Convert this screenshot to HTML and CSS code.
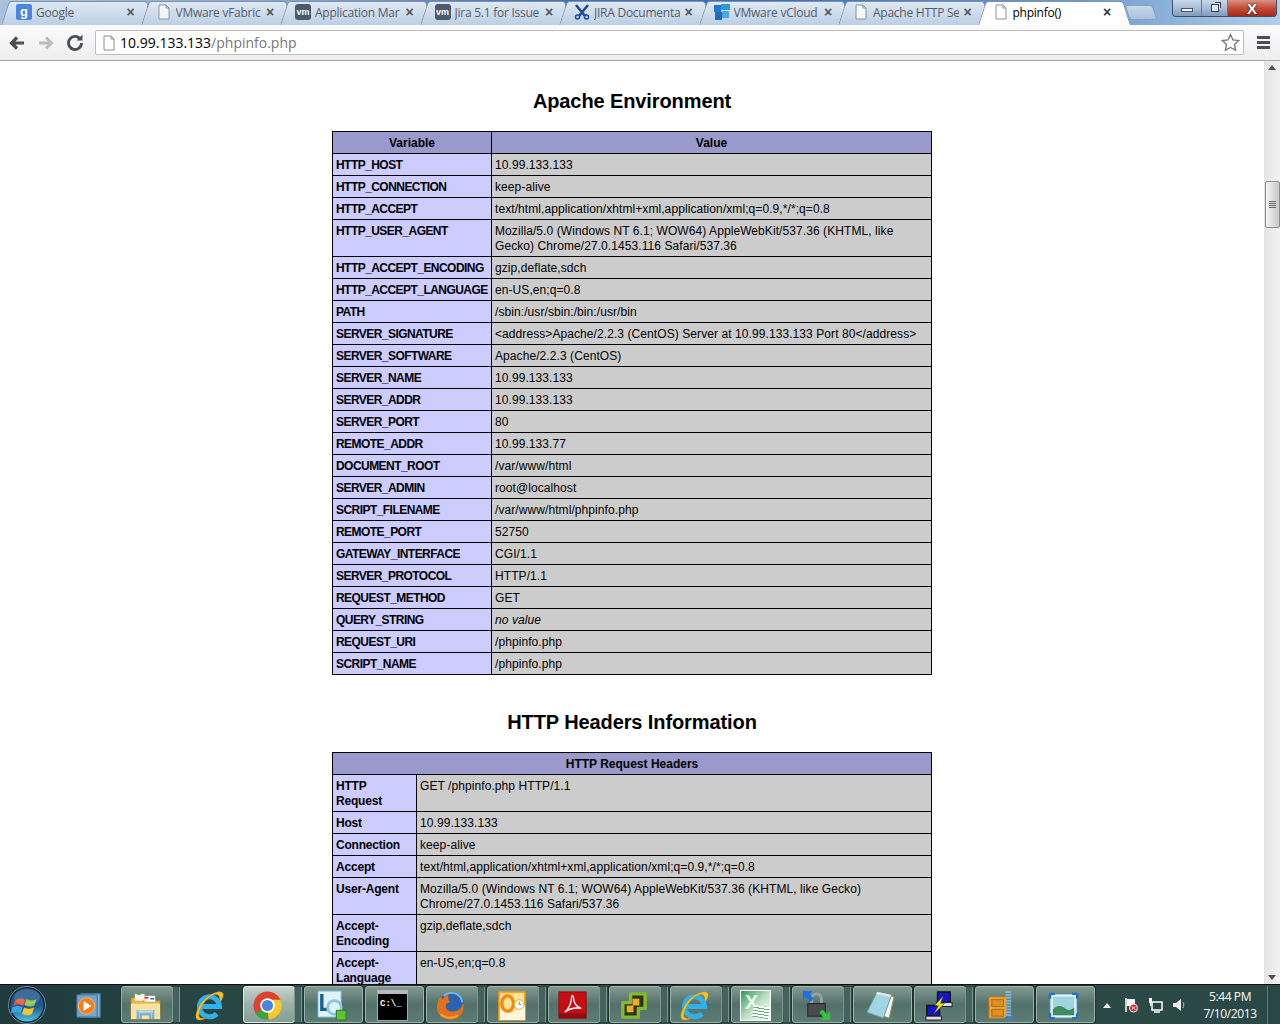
FILE: index.html
```html
<!DOCTYPE html>
<html lang="en">
<head>
<meta charset="utf-8">
<title>phpinfo()</title>
<link rel="stylesheet" href="styles.css">
</head>
<body>
<div class="browser">
  <header class="tabstrip">
    <div class="tab"><span class="favicon fav-google">g</span><span class="tab-title">Google</span><span class="tab-close">×</span></div>
    <div class="tab"><svg class="favicon" viewBox="0 0 16 16"><path d="M3 1h7l3 3v11H3z" fill="#f4f6f8" stroke="#8a929c"/><path d="M10 1v3h3" fill="none" stroke="#8a929c"/></svg><span class="tab-title">VMware vFabric</span><span class="tab-close">×</span></div>
    <div class="tab"><span class="favicon fav-vm">vm</span><span class="tab-title">Application Mar</span><span class="tab-close">×</span></div>
    <div class="tab"><span class="favicon fav-vm">vm</span><span class="tab-title">Jira 5.1 for Issue</span><span class="tab-close">×</span></div>
    <div class="tab"><svg class="favicon" viewBox="0 0 16 16"><path d="M2 1l9 11M14 1L5 12" stroke="#1d4f95" stroke-width="2.6" fill="none"/><circle cx="3.5" cy="13" r="2" fill="none" stroke="#1d4f95" stroke-width="1.5"/><circle cx="12.5" cy="13" r="2" fill="none" stroke="#1d4f95" stroke-width="1.5"/></svg><span class="tab-title">JIRA Documenta</span><span class="tab-close">×</span></div>
    <div class="tab"><svg class="favicon" viewBox="0 0 16 16"><rect x="0" y="1" width="7" height="7" fill="#1c7cc8"/><rect x="7" y="0" width="9" height="6" fill="#2d9ad8"/><rect x="1" y="8" width="7" height="8" fill="#1a6fb8"/><rect x="8" y="7" width="7" height="7" fill="#4aa8e0"/></svg><span class="tab-title">VMware vCloud</span><span class="tab-close">×</span></div>
    <div class="tab"><svg class="favicon" viewBox="0 0 16 16"><path d="M3 1h7l3 3v11H3z" fill="#f4f6f8" stroke="#8a929c"/><path d="M10 1v3h3" fill="none" stroke="#8a929c"/></svg><span class="tab-title">Apache HTTP Se</span><span class="tab-close">×</span></div>
    <div class="tab tab-active"><svg class="favicon" viewBox="0 0 16 16"><path d="M3 1h7l3 3v11H3z" fill="#fff" stroke="#8a929c"/><path d="M10 1v3h3" fill="none" stroke="#8a929c"/></svg><span class="tab-title">phpinfo()</span><span class="tab-close">×</span></div>
    <div class="newtab"></div>
    <div class="winctl">
      <span class="wbtn wmin"><i class="wmin-bar"></i></span>
      <span class="wbtn wmax"><i class="wmax-box"></i></span>
      <span class="wbtn wclose">X</span>
    </div>
  </header>

  <nav class="toolbar">
    <svg class="navicon nav-back" viewBox="0 0 18 18"><path d="M16 9H5M9 3.5L3.5 9 9 14.5" fill="none" stroke="#4a4f55" stroke-width="3.2"/></svg>
    <svg class="navicon nav-fwd" viewBox="0 0 18 18"><path d="M2 9h11M9 3.5L14.5 9 9 14.5" fill="none" stroke="#b9bcc0" stroke-width="3"/></svg>
    <svg class="navicon nav-reload" viewBox="0 0 18 18"><path d="M14.5 5.5A6.5 6.5 0 1 0 15.5 9" fill="none" stroke="#4a4f55" stroke-width="2.8"/><path d="M10.5 6.5h6v-6z" fill="#4a4f55"/></svg>
    <div class="omnibox">
      <svg class="omni-page" viewBox="0 0 16 16"><path d="M3 1h7l3 3v11H3z" fill="#fff" stroke="#8a8f95"/><path d="M10 1v3h3" fill="none" stroke="#8a8f95"/></svg>
      <span class="omni-url"><span class="omni-host">10.99.133.133</span>/phpinfo.php</span>
      <svg class="omni-star" viewBox="0 0 20 20"><path d="M10 1.5l2.6 5.7 6.1.7-4.5 4.2 1.2 6.1L10 15.2l-5.4 3 1.2-6.1L1.3 7.9l6.1-.7z" fill="#fff" stroke="#74787d" stroke-width="1.4"/></svg>
    </div>
    <div class="menu-icon"><i></i><i></i><i></i></div>
  </nav>

  <div class="viewport">
    <main class="page">
      <h2>Apache Environment</h2>
      <table class="info info-env">
        <colgroup><col class="col-env"><col></colgroup>
        <tr><th>Variable</th><th>Value</th></tr>
        <tr><td class="e">HTTP_HOST</td><td class="v">10.99.133.133</td></tr>
        <tr><td class="e">HTTP_CONNECTION</td><td class="v">keep-alive</td></tr>
        <tr><td class="e">HTTP_ACCEPT</td><td class="v">text/html,application/xhtml+xml,application/xml;q=0.9,*/*;q=0.8</td></tr>
        <tr><td class="e">HTTP_USER_AGENT</td><td class="v">Mozilla/5.0 (Windows NT 6.1; WOW64) AppleWebKit/537.36 (KHTML, like Gecko) Chrome/27.0.1453.116 Safari/537.36</td></tr>
        <tr><td class="e">HTTP_ACCEPT_ENCODING</td><td class="v">gzip,deflate,sdch</td></tr>
        <tr><td class="e">HTTP_ACCEPT_LANGUAGE</td><td class="v">en-US,en;q=0.8</td></tr>
        <tr><td class="e">PATH</td><td class="v">/sbin:/usr/sbin:/bin:/usr/bin</td></tr>
        <tr><td class="e">SERVER_SIGNATURE</td><td class="v">&lt;address&gt;Apache/2.2.3 (CentOS) Server at 10.99.133.133 Port 80&lt;/address&gt;</td></tr>
        <tr><td class="e">SERVER_SOFTWARE</td><td class="v">Apache/2.2.3 (CentOS)</td></tr>
        <tr><td class="e">SERVER_NAME</td><td class="v">10.99.133.133</td></tr>
        <tr><td class="e">SERVER_ADDR</td><td class="v">10.99.133.133</td></tr>
        <tr><td class="e">SERVER_PORT</td><td class="v">80</td></tr>
        <tr><td class="e">REMOTE_ADDR</td><td class="v">10.99.133.77</td></tr>
        <tr><td class="e">DOCUMENT_ROOT</td><td class="v">/var/www/html</td></tr>
        <tr><td class="e">SERVER_ADMIN</td><td class="v">root@localhost</td></tr>
        <tr><td class="e">SCRIPT_FILENAME</td><td class="v">/var/www/html/phpinfo.php</td></tr>
        <tr><td class="e">REMOTE_PORT</td><td class="v">52750</td></tr>
        <tr><td class="e">GATEWAY_INTERFACE</td><td class="v">CGI/1.1</td></tr>
        <tr><td class="e">SERVER_PROTOCOL</td><td class="v">HTTP/1.1</td></tr>
        <tr><td class="e">REQUEST_METHOD</td><td class="v">GET</td></tr>
        <tr><td class="e">QUERY_STRING</td><td class="v"><em>no value</em></td></tr>
        <tr><td class="e">REQUEST_URI</td><td class="v">/phpinfo.php</td></tr>
        <tr><td class="e">SCRIPT_NAME</td><td class="v">/phpinfo.php</td></tr>
      </table>
      <h2>HTTP Headers Information</h2>
      <table class="info info-http">
        <colgroup><col class="col-http"><col></colgroup>
        <tr><th colspan="2">HTTP Request Headers</th></tr>
        <tr><td class="e">HTTP Request</td><td class="v">GET /phpinfo.php HTTP/1.1</td></tr>
        <tr><td class="e">Host</td><td class="v">10.99.133.133</td></tr>
        <tr><td class="e">Connection</td><td class="v">keep-alive</td></tr>
        <tr><td class="e">Accept</td><td class="v">text/html,application/xhtml+xml,application/xml;q=0.9,*/*;q=0.8</td></tr>
        <tr><td class="e">User-Agent</td><td class="v">Mozilla/5.0 (Windows NT 6.1; WOW64) AppleWebKit/537.36 (KHTML, like Gecko) Chrome/27.0.1453.116 Safari/537.36</td></tr>
        <tr><td class="e">Accept-Encoding</td><td class="v">gzip,deflate,sdch</td></tr>
        <tr><td class="e">Accept-Language</td><td class="v">en-US,en;q=0.8</td></tr>
      </table>
    </main>
    <aside class="scrollbar">
      <div class="sb-up"></div>
      <div class="sb-thumb"><i></i><i></i><i></i><i></i></div>
      <div class="sb-down"></div>
    </aside>
  </div>

  <footer class="taskbar">
    <div class="orb-slot">
      <svg class="orb" viewBox="0 0 38 38">
        <defs>
          <linearGradient id="orbg" x1="0" y1="0" x2="0" y2="1"><stop offset="0" stop-color="#1c4f86"/><stop offset=".55" stop-color="#1f5a8f"/><stop offset="1" stop-color="#49c3e6"/></linearGradient>
          <linearGradient id="ieg" x1="0" y1="0" x2="0" y2="1"><stop offset="0" stop-color="#7fdcfa"/><stop offset="1" stop-color="#1a9fe6"/></linearGradient>
        </defs>
        <circle cx="19" cy="19" r="18.5" fill="#0f2c3e" stroke="#6e8a96"/>
        <circle cx="19" cy="19" r="16.5" fill="url(#orbg)"/>
        <path d="M7 15c3-3 6-3 10-1l-2 6c-3-2-6-2-10 0z" fill="#e8532d"/>
        <path d="M18.500 13c3 2 6 2 10 0l-2 6.500c-3 2-6 1-10-.5z" fill="#8fc23a"/>
        <path d="M4.500 21.500c3-2 6-2 10-.5l-2 6.500c-3-2-6-2-10 0z" fill="#3ba3e0"/>
        <path d="M16 21.500c3 1.500 6 2 10 0l-2 6.500c-3 2-7 1.500-10 0z" fill="#f6c52e"/>
        <ellipse cx="19" cy="11" rx="13" ry="8" fill="#fff" opacity=".15"/>
      </svg>
    </div>
    <div class="task plain">
      <svg viewBox="0 0 32 32"><rect x="9" y="4" width="20" height="24" fill="#7fb2d2" stroke="#4d82a8"/><rect x="5" y="5" width="21" height="23" rx="1" fill="#6fa7cf" stroke="#3e6f99"/><circle cx="15" cy="16.500" r="8.500" fill="#f37f1e" stroke="#f9b36b"/><path d="M12 11.500l8 5-8 5z" fill="#fff"/></svg>
    </div>
    <div class="task narrow">
      <svg viewBox="0 0 32 32"><path d="M1 8h10l2 3h18v19H1z" fill="#dcb64f" stroke="#a68530"/><rect x="5" y="4" width="10" height="7" fill="#f6f3e8"/><rect x="7" y="3" width="4" height="2" fill="#3fae3a"/><rect x="15" y="6" width="11" height="6" fill="#fff"/><rect x="15" y="7" width="4" height="2" fill="#d83a2a"/><rect x="21" y="8" width="4" height="2" fill="#3a8ad8"/><path d="M1 14h30v16H1z" fill="#f7e3a0"/><path d="M8 30v-8h16v8M11 30v-5h10v5" fill="none" stroke="#7fb2d2" stroke-width="2.500"/><path d="M8 22h16" stroke="#bcdcec" stroke-width="2"/></svg>
    </div>
    <div class="task plain">
      <svg viewBox="0 0 34 34"><path d="M7 18h21A11 11 0 1 0 25 26" fill="none" stroke="#2fb0ef" stroke-width="5.500"/><path d="M3 32C-1 27 9 5 27 2c7-1 6 6 2 11-1-5-1-9-6-8C12 8 3 25 6 30c2 2 6 1 9-1-4 4-9 5-12 3z" fill="#f4c02c" stroke="#b8860b" stroke-width=".5"/></svg>
    </div>
    <div class="task narrow active">
      <svg viewBox="0 0 32 32"><circle cx="16" cy="16" r="14.500" fill="#e0402e"/><path d="M16 16L3.500 24A14.500 14.500 0 0 0 17 30.500z" fill="#3aa33e"/><path d="M16 16l1 14.500A14.500 14.500 0 0 0 29.500 10H16z" fill="#f6ca2e"/><circle cx="16" cy="16" r="7.500" fill="#fff"/><circle cx="16" cy="16" r="5.800" fill="#4a86d8"/></svg>
    </div>
    <div class="task wide">
      <svg viewBox="0 0 32 32"><rect x="2" y="1" width="24" height="27" fill="#dff2fa" stroke="#67b4d4"/><path d="M6 4v16h6" fill="none" stroke="#1d5f8e" stroke-width="3.500"/><circle cx="19" cy="18" r="7" fill="none" stroke="#8fc6de" stroke-width="3"/><rect x="21" y="21" width="10" height="10" fill="#5ec433" stroke="#2d7a1e"/></svg>
    </div>
    <div class="task wide">
      <div class="cmd">C:\_</div>
    </div>
    <div class="task narrow">
      <svg viewBox="0 0 32 32"><circle cx="17" cy="15" r="13" fill="#2a63b0"/><path d="M9 6c3-3 9-4 13-2 4 2 6 5 6 9" fill="none" stroke="#7ab5e6" stroke-width="2"/><path d="M6 7C2 12 1 18 3 23c3 7 12 9 18 7 7-3 10-10 8-17-1 5-4 9-9 9-4 1-9-1-9-5 0-3 2-4 5-4-2-2-3-5-2-9-3 1-5 3-6 6 0-1-1-2-2-3z" fill="#e2701d"/><path d="M6 25c4 4 12 5 18 1" fill="none" stroke="#f4a530" stroke-width="2"/></svg>
    </div>
    <div class="task narrow">
      <svg viewBox="0 0 32 32"><rect x="3" y="2" width="27" height="29" fill="#f7c643" stroke="#f09a12" stroke-width="1.500"/><rect x="4.500" y="3.500" width="24" height="26" fill="#fbe39b"/><path d="M4 20l12 4 14-8v15H4z" fill="#fff6dc"/><ellipse cx="12" cy="14" rx="6" ry="8" fill="none" stroke="#ee8d12" stroke-width="3.500"/><circle cx="24" cy="15" r="5" fill="#fff" stroke="#e6a93c"/><path d="M24 12v3h2" fill="none" stroke="#c97c10"/></svg>
    </div>
    <div class="task narrow">
      <svg viewBox="0 0 32 32"><rect x="2" y="2" width="28" height="27" fill="#c70d12" stroke="#8c0a0e"/><path d="M2 24h28v5H2z" fill="#930b10"/><path d="M8 23c4-3 7-10 7-15 0-3 2-3 2 0 0 5 3 9 8 11-5-1-12 0-17 4z" fill="none" stroke="#fff" stroke-width="1.400"/></svg>
    </div>
    <div class="task narrow">
      <svg viewBox="0 0 32 32"><path d="M13 4h15v15h-7v9H5V13h8z" fill="#27351c" stroke="#86b92f" stroke-width="3.500" stroke-linejoin="round"/><rect x="15" y="9" width="7" height="7" fill="#f0aa26"/><rect x="9" y="16" width="7" height="7" fill="#f0aa26"/></svg>
    </div>
    <div class="task narrow">
      <svg viewBox="0 0 34 34"><path d="M7 18h21A11 11 0 1 0 25 26" fill="none" stroke="#2fb0ef" stroke-width="5.500"/><path d="M3 32C-1 27 9 5 27 2c7-1 6 6 2 11-1-5-1-9-6-8C12 8 3 25 6 30c2 2 6 1 9-1-4 4-9 5-12 3z" fill="#f4c02c" stroke="#b8860b" stroke-width=".5"/></svg>
    </div>
    <div class="task narrow">
      <div class="tile tile-excel"><b>X</b><i class="sheet"></i></div>
    </div>
    <div class="task narrow">
      <svg viewBox="0 0 32 32"><path d="M11 15V9a5 5 0 0 1 10 0v6" fill="none" stroke="#a0a0a0" stroke-width="3"/><rect x="7" y="14" width="18" height="13" fill="#4a4a4a" stroke="#222"/><path d="M2 1h10L9 4l4 5-3 3-5-5-3 3z" fill="#1e70e8"/><path d="M30 31H20l3-3-4-5 3-3 5 5 3-3z" fill="#2fc43a"/></svg>
    </div>
    <div class="task wide">
      <svg viewBox="0 0 32 32"><path d="M14 3l16 4-5 22-6-2z" fill="#f2f4f2" stroke="#a58c4c"/><path d="M12 3l15 3-8 23L2 23z" fill="#9fd6e2" stroke="#6f9aa6"/><path d="M12 3l15 3" stroke="#e8e8e8" stroke-width="2.500"/></svg>
    </div>
    <div class="task narrow">
      <svg viewBox="0 0 32 32"><rect x="15" y="2" width="13" height="11" fill="#1616c8" stroke="#111" stroke-width="1.500"/><rect x="4" y="16" width="13" height="11" fill="#1616c8" stroke="#111" stroke-width="1.500"/><rect x="14" y="13" width="16" height="4" fill="#ddd" stroke="#222"/><rect x="3" y="27" width="16" height="4" fill="#ddd" stroke="#222"/><path d="M21 6l-9 10h4l-5 9 11-11h-4z" fill="#f6e620" stroke="#333" stroke-width=".5"/></svg>
    </div>
    <div class="task wide">
      <svg viewBox="0 0 32 32"><rect x="2" y="7" width="18" height="22" fill="#eea33a" stroke="#b97a20"/><rect x="5" y="10" width="12" height="7" fill="#e08f1e" stroke="#a8691a"/><rect x="5" y="20" width="12" height="7" fill="#e08f1e" stroke="#a8691a"/><path d="M22 1v27" stroke="#7fb5dd" stroke-width="6" stroke-dasharray="2 1"/><path d="M20 27h5l5 4H16z" fill="#3f7fb5"/></svg>
    </div>
    <div class="task wide">
      <svg viewBox="0 0 32 32"><rect x="2" y="4" width="28" height="25" fill="#dff0f8" stroke="#4a8bc4"/><rect x="5" y="7" width="22" height="19" fill="#9fd3dd"/><path d="M5 20c5-5 9-4 13-1s6 1 9-1v8H5z" fill="#3f8a5e"/><path d="M2 4h5M2 4v5M30 4h-5M30 4v5M2 29h5M2 29v-5M30 29h-5M30 29v-5" stroke="#1e6fc4" stroke-width="2.500"/></svg>
    </div>
    <div class="tray">
      <span class="tray-arrow"></span>
      <svg class="tray-icon" viewBox="0 0 16 16"><path d="M3 1v14" stroke="#fff" stroke-width="1.500"/><path d="M4 2h8v7H4z" fill="#fff"/><circle cx="10.500" cy="11" r="4" fill="#d82020" stroke="#fff"/><path d="M8.800 9.300l3.400 3.400m0-3.400l-3.400 3.400" stroke="#fff"/></svg>
      <svg class="tray-icon" viewBox="0 0 16 16"><rect x="5" y="5" width="10" height="8" fill="none" stroke="#fff" stroke-width="1.500"/><path d="M7 15h6" stroke="#fff" stroke-width="1.500"/><rect x="2" y="1" width="3" height="5" fill="#fff"/><path d="M3.500 6v3" stroke="#fff"/></svg>
      <svg class="tray-icon" viewBox="0 0 16 16"><path d="M2 6h3l5-4v12l-5-4H2z" fill="#eee"/><path d="M12 5c1 2 1 4 0 6" stroke="#bbb" fill="none"/></svg>
      <div class="clock"><span>5:44 PM</span><span>7/10/2013</span></div>
      <div class="showdesk"></div>
    </div>
  </footer>
</div>
</body>
</html>
```

FILE: styles.css
```css
* { box-sizing: border-box; }
html, body { margin: 0; height: 100%; overflow: hidden; }
body { font-family: "Liberation Sans", Arial, sans-serif; color: #000; background: #fff; }

.browser { display: flex; flex-direction: column; height: 1024px; width: 1280px; }

/* tab strip */
.tabstrip {
  flex: none; height: 25px; display: flex; align-items: flex-end; padding-left: 8px;
  position: relative;
  background: linear-gradient(90deg, #a7c1de 0%, #7ea3cf 25%, #3f72b8 42%, #3a6fb8 60%, #6f9dd0 85%, #b4cde8 100%);
  font-family: "Open Sans", "Noto Sans", sans-serif;
  font-size: 12px;
}
.tab {
  position: relative; width: 139.5px; height: 24px; flex: none;
  display: flex; align-items: center; padding: 0 12px 2px 8px; gap: 4px; color: #565c66;
}
.tab::before, .tab::after {
  content: ""; position: absolute; top: 0; bottom: 0; width: 55%; z-index: 0;
  background: linear-gradient(#dfe8f3, #bccfe6);
  border-top: 1px solid #7f93ab;
}
.tab::before { left: -3px; transform: skewX(-18deg); border-left: 1px solid #7f93ab; border-radius: 3px 0 0 0; }
.tab::after { right: -3px; transform: skewX(18deg); border-right: 1px solid #7f93ab; border-radius: 0 3px 0 0; }
.tab > * { position: relative; z-index: 1; }
.tab-active { color: #000; z-index: 2; }
.tab-active::before, .tab-active::after { background: #fff; }
.favicon { width: 16px; height: 16px; flex: none; }
.fav-google { background: #4a86e0; color: #fff; font: bold 13px/15px "Liberation Sans", sans-serif; text-align: center; border-radius: 2px; }
.fav-vm { background: #4d5a6e; color: #fff; font: bold 9px/16px "Liberation Sans", sans-serif; text-align: center; border-radius: 3px; }
.tab-title { flex: 1; overflow: hidden; white-space: nowrap; min-width: 0; letter-spacing: -.25px; }
.tab-close { width: 10px; font: bold 14px/14px "Liberation Sans", sans-serif; color: #555; text-align: center; }
.tab-active .tab-close { color: #333; }
.newtab {
  width: 28px; height: 15px; flex: none; margin: 0 0 5px 3px;
  background: linear-gradient(#c7d8ea, #a9c2dd); border: 1px solid #8ba2bc; border-radius: 3px; transform: skewX(18deg);
}
.winctl { position: absolute; top: 0; right: 3px; height: 17px; display: flex; border: 1px solid #3d4f66; border-top: 0; border-radius: 0 0 4px 4px; overflow: hidden; }
.wbtn { display: flex; align-items: center; justify-content: center; height: 100%; background: linear-gradient(#c9d8e9, #a5bdd7 50%, #7f9cbc); }
.wmin, .wmax { border-right: 1px solid #5f7894; }
.wmin { width: 29px; }
.wmax { width: 26px; }
.wmin-bar { width: 12px; height: 4px; background: #f4f6f8; border: 1px solid #47566a; margin-top: 4px; }
.wmax-box { width: 8px; height: 8px; background: #dfe7ef; border: 1px solid #333f50; box-shadow: 2px -2px 0 -1px #dfe7ef, 3px -3px 0 -1px #333f50; }
.wclose { width: 48px; background: linear-gradient(#d99284, #c54a38 50%, #a8281a); color: #fff; font: bold 15px/1 "Liberation Sans", sans-serif; text-shadow: 0 0 2px #222, 0 0 1px #222; }

/* toolbar */
.toolbar {
  flex: none; height: 36px; display: flex; align-items: center; padding: 0 10px 0 8px;
  background: linear-gradient(#fbfbfb, #eeeeee); border-bottom: 1px solid #a8a8a8;
}
.navicon { width: 18px; height: 18px; flex: none; margin-right: 11px; }
.nav-reload { margin-right: 11px; }
.omnibox {
  flex: 1; height: 25px; display: flex; align-items: center; gap: 3px; padding: 0 3px 0 5px;
  background: #fff; border: 1px solid #bdbdbd; border-radius: 2px;
  font-family: "Open Sans", "Noto Sans", sans-serif;
  font-size: 14px; color: #777;
}
.omni-page { width: 16px; height: 16px; flex: none; }
.omni-url { flex: 1; }
.omni-host { color: #000; }
.omni-star { width: 19px; height: 19px; flex: none; }
.menu-icon { width: 13px; margin-left: 13px; display: flex; flex-direction: column; gap: 2px; }
.menu-icon i { height: 3px; background: #4c4f53; }

/* page */
.viewport { flex: 1; min-height: 0; display: flex; overflow: hidden; }
.page { flex: 1; min-width: 0; overflow: hidden; padding-top: 29px; }
h2 { margin: 36px 0 18px; font-size: 20px; line-height: 23px; font-weight: bold; text-align: center; letter-spacing: -.1px; }
.page h2:first-child { margin-top: 0; }
.info { width: 600px; margin: 0 auto; border-collapse: collapse; table-layout: fixed; font-size: 12px; line-height: 15px; }
.info th, .info td { border: 1px solid #000; padding: 4px 3px 2px; vertical-align: baseline; }
.info th { background: #9999cc; text-align: center; font-weight: bold; }
.info .e { background: #ccccff; font-weight: bold; }
.info .v { background: #cccccc; letter-spacing: .08px; }
.info-env .e { letter-spacing: -.55px; }
.info-http .e { letter-spacing: -.2px; }
.col-env { width: 159px; }
.col-http { width: 84px; }

/* scrollbar */
.scrollbar { flex: none; width: 16px; display: flex; flex-direction: column; align-items: stretch; background: linear-gradient(90deg, #e6e6e6, #f1f1f1); border-left: 1px solid #e0e0e0; }
.sb-up, .sb-down { height: 16px; flex: none; position: relative; }
.sb-up::after, .sb-down::after { content: ""; position: absolute; left: 3px; border: 4px solid transparent; }
.sb-up::after { top: 0; border-bottom: 5px solid #505050; }
.sb-down::after { bottom: 0; border-top: 5px solid #505050; }
.sb-thumb {
  height: 47px; margin-top: 104px; margin-bottom: auto; display: flex; flex-direction: column; align-items: center; justify-content: center; gap: 1px;
  background: linear-gradient(90deg, #f4f4f4, #c9c9c9); border: 1px solid #8f8f8f; border-radius: 2px;
}
.sb-thumb i { width: 7px; height: 1px; background: #666; }

/* taskbar */
.taskbar {
  flex: none; height: 40px; display: flex; align-items: stretch; padding-top: 1px; position: relative;
  border-top: 1px solid #101010;
  background: linear-gradient(90deg, #1f3b3d, #2e4d48 30%, #2b4a46 70%, #2a4845);
  overflow: hidden;
}
.orb-slot { width: 57px; flex: none; display: flex; align-items: center; justify-content: center; padding-right: 4px; }
.orb { width: 38px; height: 38px; }
.task { width: 61px; flex: none; display: flex; align-items: center; justify-content: center; position: relative; }
.task svg, .task .cmd, .task .tile { width: 31px; height: 31px; flex: none; }
.task::before {
  content: ""; position: absolute; top: 0; bottom: 1px; left: 3px;
  background: linear-gradient(#82998f, #51716a 50%, #5d7d74);
  border: 1px solid #9db0aa; border-radius: 3px; box-shadow: 0 0 0 1px #1e342f;
}
.task > * { position: relative; }
.task.narrow::before { width: 50px; }
.task.narrow::after {
  content: ""; position: absolute; top: 1px; bottom: 2px; left: 54px; width: 6px;
  border-left: 1px solid #7b948c; border-right: 1px solid #7b948c;
  background: #43625b;
}
.task.wide::before { width: 57px; }
.task.plain::before { display: none; }
.task.active::before { background: linear-gradient(#c6d2cd, #9bb0a8 50%, #84a097); border-color: #e4ece8; }
.task.narrow > svg, .task.narrow > div { margin-right: 6px; }
.cmd { background: #000; border: 1px solid #a8a8a8; border-top: 4px solid #b8b8c8; color: #fff; font: bold 9px/20px "Liberation Mono", monospace; padding-left: 2px; }
.tile { display: flex; align-items: center; justify-content: center; border: 1px solid #fff; }
.tile b { font: bold 20px/1 "Liberation Sans", sans-serif; }
.tile-excel { background: linear-gradient(135deg, #2f9a52, #c8e4cc 55%, #fff); color: #e8f6ea; justify-content: flex-start; padding-left: 4px; padding-bottom: 6px; position: relative; }
.sheet { position: absolute; right: 1px; bottom: 2px; width: 16px; height: 12px; background: repeating-linear-gradient(#fff 0 2px, #6ea87f 2px 3px); transform: rotate(10deg); }
.tray { flex: 1; display: flex; align-items: center; padding-left: 5px; color: #fff; font-family: "Open Sans", "Noto Sans", sans-serif; font-size: 12px; }
.tray-arrow { width: 0; height: 0; border: 4px solid transparent; border-bottom: 5px solid #f0f0f0; border-top: 0; margin: 0 12px 0 4px; }
.tray-icon { width: 16px; height: 16px; flex: none; margin-right: 8px; }
.clock { width: 70px; display: flex; flex-direction: column; align-items: center; line-height: 17px; letter-spacing: -.4px; }
.showdesk { width: 13px; align-self: stretch; margin-left: auto; border-left: 1px solid #5f7c76; }
```
